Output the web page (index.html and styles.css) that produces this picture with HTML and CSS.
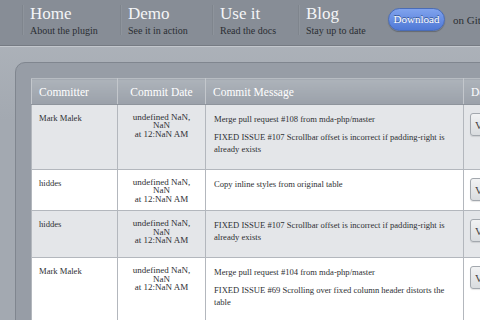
FILE: index.html
```html
<!DOCTYPE html>
<html lang="en">
<head>
    <meta charset="UTF-8">
    <title>Fixed Header Table</title>
    <link rel="stylesheet" href="styles.css">
</head>
<body>
    <header class="topbar">
        <nav class="nav">
            <a class="nav-item nav-home" href="#">
                <span class="nav-title">Home</span>
                <span class="nav-sub">About the plugin</span>
            </a>
            <a class="nav-item nav-demo" href="#">
                <span class="nav-title">Demo</span>
                <span class="nav-sub">See it in action</span>
            </a>
            <a class="nav-item nav-use" href="#">
                <span class="nav-title">Use it</span>
                <span class="nav-sub">Read the docs</span>
            </a>
            <a class="nav-item nav-blog" href="#">
                <span class="nav-title">Blog</span>
                <span class="nav-sub">Stay up to date</span>
            </a>
        </nav>
        <a class="btn-download" href="#">Download</a>
        <span class="on-github">on GitHub</span>
    </header>

    <main class="page">
        <section class="panel">
            <table class="commits">
                <thead>
                    <tr>
                        <th class="col-name">Committer</th>
                        <th class="col-date">Commit Date</th>
                        <th class="col-msg">Commit Message</th>
                        <th class="col-diff">Details</th>
                    </tr>
                </thead>
                <tbody>
                    <tr class="odd">
                        <td>Mark Malek</td>
                        <td class="date">undefined NaN,<br>NaN<br>at 12:NaN AM</td>
                        <td class="msg">
                            <p>Merge pull request #108 from mda-php/master</p>
                            <p>FIXED ISSUE #107 Scrollbar offset is incorrect if padding-right is already exists</p>
                        </td>
                        <td class="view"><button class="btn-view">View</button></td>
                    </tr>
                    <tr>
                        <td>hiddes</td>
                        <td class="date">undefined NaN,<br>NaN<br>at 12:NaN AM</td>
                        <td class="msg">
                            <p>Copy inline styles from original table</p>
                        </td>
                        <td class="view"><button class="btn-view">View</button></td>
                    </tr>
                    <tr class="odd">
                        <td>hiddes</td>
                        <td class="date">undefined NaN,<br>NaN<br>at 12:NaN AM</td>
                        <td class="msg">
                            <p>FIXED ISSUE #107 Scrollbar offset is incorrect if padding-right is already exists</p>
                        </td>
                        <td class="view"><button class="btn-view">View</button></td>
                    </tr>
                    <tr>
                        <td>Mark Malek</td>
                        <td class="date">undefined NaN,<br>NaN<br>at 12:NaN AM</td>
                        <td class="msg">
                            <p>Merge pull request #104 from mda-php/master</p>
                            <p>FIXED ISSUE #69 Scrolling over fixed column header distorts the table</p>
                        </td>
                        <td class="view"><button class="btn-view">View</button></td>
                    </tr>
                </tbody>
            </table>
        </section>
    </main>
</body>
</html>
```

FILE: styles.css
```css
html, body {
    margin: 0;
    padding: 0;
}
body {
    width: 480px;
    height: 320px;
    overflow: hidden;
    background: linear-gradient(#b1b6bd, #a3a9b1 120px);
    font-family: "Liberation Serif", "DejaVu Serif", serif;
    color: #333;
}
.topbar {
    display: flex;
    align-items: center;
    height: 45px;
    padding-left: 22px;
    background: #878d96;
    border-bottom: 1px solid #767b83;
    box-shadow: 0 1px 0 #c3c7cd;
    white-space: nowrap;
}
.nav {
    display: flex;
    flex-shrink: 0;
    align-self: stretch;
    padding: 5px 0 10px;
}
.nav-item {
    display: flex;
    flex-direction: column;
    flex-shrink: 0;
    box-sizing: border-box;
    padding-left: 7px;
    border-left: 1px solid #7f858d;
    box-shadow: inset 1px 0 0 #8e949c;
    text-decoration: none;
}
.nav-home { width: 98px; }
.nav-demo { width: 92px; }
.nav-use { width: 86px; }
.nav-blog { width: 90px; }
.nav-title {
    font-size: 17px;
    line-height: 18px;
    color: #f4f5f7;
}
.nav-sub {
    margin-top: 2px;
    font-size: 10px;
    line-height: 11px;
    color: #2b2e33;
}
.btn-download {
    display: block;
    flex-shrink: 0;
    width: 55px;
    height: 21px;
    margin-top: -6px;
    border: 1px solid #4a6cb6;
    border-radius: 12px;
    background: linear-gradient(#80a3ee, #4f78d6);
    box-shadow: 0 1px 1px rgba(0, 0, 0, 0.25);
    color: #fff;
    font-size: 11px;
    line-height: 21px;
    text-align: center;
    text-decoration: none;
    text-shadow: 0 -1px 0 #33538f;
}
.on-github {
    margin: -6px 0 0 8px;
    font-size: 11px;
    color: #2b2e33;
}

.page {
    padding: 16px 0 0 15px;
}
.panel {
    width: 620px;
    height: 400px;
    padding: 15px 0 0 15px;
    border: 1px solid #80868f;
    border-radius: 10px;
    background: #979da6;
}
.commits {
    border-collapse: collapse;
    table-layout: fixed;
    width: 520px;
    font-size: 8.6px;
}
.commits th,
.commits td {
    box-sizing: border-box;
}
.commits th {
    height: 26px;
    padding: 0 7px;
    text-align: left;
    font-weight: normal;
    font-size: 11.5px;
    color: #fff;
    background: linear-gradient(#adb3ba, #9ba1aa);
    border: 1px solid #c3c7cc;
    border-top-color: #b7bcc2;
    border-bottom-color: #8e949c;
}
.commits th.col-date {
    text-align: center;
}
.col-name { width: 86px; }
.col-date { width: 88px; }
.col-msg { width: 258px; }
.col-diff { width: 88px; }

.commits td {
    vertical-align: top;
    padding: 7px;
    line-height: 12px;
    color: #2e3033;
    background: #fff;
    border: 1px solid #b3b7bd;
}
.commits tr.odd td {
    background: #e4e6e9;
}
.commits td.date {
    padding-top: 8px;
    font-size: 9px;
    line-height: 8.4px;
    text-align: center;
}
.commits td.msg {
    padding: 8px 8px 7px;
}
.msg p {
    margin: 0 0 6px;
}
.msg p:last-child {
    margin-bottom: 7px;
}
.commits td.view {
    padding: 8px 0 6px 6px;
}
.btn-view {
    display: block;
    height: 23px;
    padding: 0 5px 0 4px;
    border: 1px solid #a3a8ae;
    border-radius: 3px;
    background: linear-gradient(#f2f3f4, #d9dcdf);
    box-shadow: 0 1px 1px rgba(0, 0, 0, 0.1);
    font-family: "Liberation Serif", serif;
    font-size: 11px;
    color: #444;
}
```
